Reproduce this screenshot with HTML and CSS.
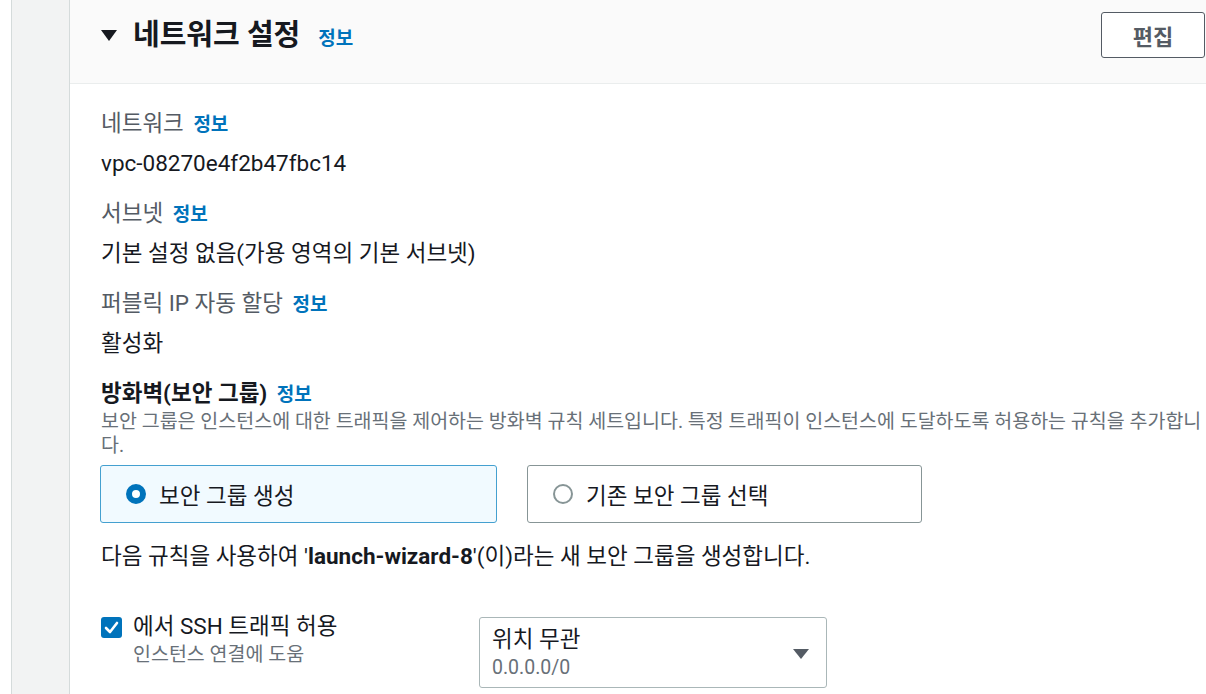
FILE: index.html
```html
<!DOCTYPE html>
<html lang="ko">
<head>
<meta charset="utf-8">
<title>네트워크 설정</title>
<link rel="stylesheet" href="styles.css">
</head>
<body>
<div class="page">
  <div class="gutter"></div>
  <div class="rail"></div>
  <section class="panel">
    <header class="panel-head">
      <div class="head-title">
        <svg class="caret" width="16" height="11" viewBox="0 0 16 11"><polygon points="0,0 16,0 8,11" fill="#16191f"/></svg>
        <h2>네트워크 설정</h2>
        <a class="info">정보</a>
      </div>
      <button class="btn">편집</button>
    </header>
    <div class="panel-body">
      <div class="field">
        <div class="label">네트워크 <a class="info">정보</a></div>
        <div class="value">vpc-08270e4f2b47fbc14</div>
      </div>
      <div class="field">
        <div class="label">서브넷 <a class="info">정보</a></div>
        <div class="value">기본 설정 없음(가용 영역의 기본 서브넷)</div>
      </div>
      <div class="field">
        <div class="label">퍼블릭 IP 자동 할당 <a class="info">정보</a></div>
        <div class="value">활성화</div>
      </div>
      <div class="fw">
        <div class="fw-label">방화벽(보안 그룹) <a class="info">정보</a></div>
        <p class="desc">보안 그룹은 인스턴스에 대한 트래픽을 제어하는 방화벽 규칙 세트입니다. 특정 트래픽이 인스턴스에 도달하도록 허용하는 규칙을 추가합니다.</p>
        <div class="cards">
          <div class="card selected"><span class="radio on"></span>보안 그룹 생성</div>
          <div class="card"><span class="radio"></span>기존 보안 그룹 선택</div>
        </div>
        <p class="note">다음 규칙을 사용하여 '<b>launch-wizard-8</b>'(이)라는 새 보안 그룹을 생성합니다.</p>
        <div class="rule">
          <div class="check-wrap">
            <span class="checkbox"><svg width="21" height="21" viewBox="0 0 21 21"><polyline points="5,11 9,15 16,6" fill="none" stroke="#fff" stroke-width="2.6" stroke-linecap="round" stroke-linejoin="round"/></svg></span>
            <div class="check-text">
              <div class="check-main">에서 SSH 트래픽 허용</div>
              <div class="check-sub">인스턴스 연결에 도움</div>
            </div>
          </div>
          <div class="select">
            <div class="select-text">
              <div class="select-main">위치 무관</div>
              <div class="select-sub">0.0.0.0/0</div>
            </div>
            <svg class="select-caret" width="16" height="10" viewBox="0 0 16 10"><polygon points="0,0 16,0 8,10" fill="#545b64"/></svg>
          </div>
        </div>
      </div>
    </div>
  </section>
</div>
</body>
</html>
```
FILE: styles.css
```css
* { box-sizing: border-box; }
html, body { margin: 0; padding: 0; }
body {
  width: 1206px;
  height: 694px;
  overflow: hidden;
  background: #fff;
  font-family: "Roboto", "Noto Sans CJK KR", sans-serif;
  color: #16191f;
}
.page {
  display: flex;
  height: 694px;
}
.gutter { width: 11px; flex: none; background: #fff; }
.rail {
  width: 59px;
  flex: none;
  background: #f2f3f3;
  border-left: 1px solid #d5dbdb;
  border-right: 1px solid #d5dbdb;
}
.panel {
  flex: 1;
  min-width: 0;
  background: #fff;
}
.panel-head {
  height: 84px;
  background: #fafafa;
  border-bottom: 1px solid #eaeded;
  display: flex;
  align-items: center;
  justify-content: space-between;
  padding: 0 1px 13px 31px;
}
.head-title {
  display: flex;
  align-items: center;
}
.caret { margin-right: 16px; margin-top: 1px; }
h2 {
  margin: 0;
  font-size: 29px;
  font-weight: 700;
  line-height: 36px;
  color: #16191f;
}
.info {
  color: #0073bb;
  font-weight: 700;
  font-size: 19px;
  margin-left: 14px;
  text-decoration: none;
}
h2 + .info { margin-left: 18px; margin-top: 2px; }
.btn {
  width: 104px;
  height: 46px;
  border: 1px solid #545b64;
  border-radius: 3px;
  background: #fff;
  color: #545b64;
  font-family: inherit;
  font-weight: 700;
  font-size: 22px;
  padding: 0;
}
.panel-body {
  padding: 24px 0 0 31px;
}
.field { margin-bottom: 20px; }
.label {
  height: 30px;
  font-size: 22.5px;
  line-height: 30px;
  color: #545b64;
}
.label .info { margin-left: 4px; }
.value {
  height: 30px;
  margin-top: 10px;
  font-size: 22.5px;
  line-height: 30px;
  color: #16191f;
}
.fw-label {
  height: 30px;
  font-size: 22.5px;
  font-weight: 700;
  line-height: 30px;
  color: #16191f;
}
.fw-label .info { margin-left: 4px; }
.desc {
  height: 48px;
  margin: 2px 0 0;
  font-size: 19.5px;
  line-height: 24px;
  color: #687078;
  padding-right: 2px;
}
.cards {
  display: flex;
  gap: 30px;
  margin-top: 7px;
  margin-left: -1px;
}
.card {
  display: flex;
  align-items: center;
  height: 58px;
  border: 1px solid #879596;
  border-radius: 3px;
  padding-left: 25px;
  font-size: 22.5px;
  color: #16191f;
  width: 395px;
}
.card.selected {
  width: 397px;
  background: #f1faff;
  border-color: #44a0d0;
}
.radio {
  width: 20px;
  height: 20px;
  border-radius: 50%;
  border: 2px solid #879596;
  margin-right: 13px;
  flex: none;
}
.radio.on {
  border: 6px solid #0073bb;
  background: #fff;
}
.note {
  height: 30px;
  margin: 18px 0 0;
  font-size: 22.5px;
  line-height: 30px;
  color: #16191f;
}
.note b { font-weight: 700; }
.rule {
  display: flex;
  align-items: flex-start;
  margin-top: 46px;
}
.check-wrap {
  display: flex;
  align-items: flex-start;
  width: 378px;
}
.checkbox {
  width: 21px;
  height: 21px;
  border-radius: 3px;
  background: #0073bb;
  flex: none;
  margin-right: 11px;
  display: block;
}
.checkbox svg { display: block; }
.check-text { margin-top: -6px; }
.check-main {
  height: 30px;
  font-size: 22.5px;
  line-height: 30px;
  color: #16191f;
}
.check-sub {
  height: 28px;
  font-size: 19.5px;
  line-height: 28px;
  color: #687078;
}
.select {
  width: 348px;
  height: 71px;
  border: 1px solid #aab7b8;
  border-radius: 3px;
  display: flex;
  align-items: center;
  justify-content: space-between;
  padding: 0 17px 0 12px;
}
.select-main {
  height: 30px;
  font-size: 22.5px;
  line-height: 30px;
  color: #16191f;
}
.select-sub {
  height: 28px;
  font-size: 19.5px;
  line-height: 28px;
  color: #687078;
}
.select-caret { margin-top: 2px; }
```
